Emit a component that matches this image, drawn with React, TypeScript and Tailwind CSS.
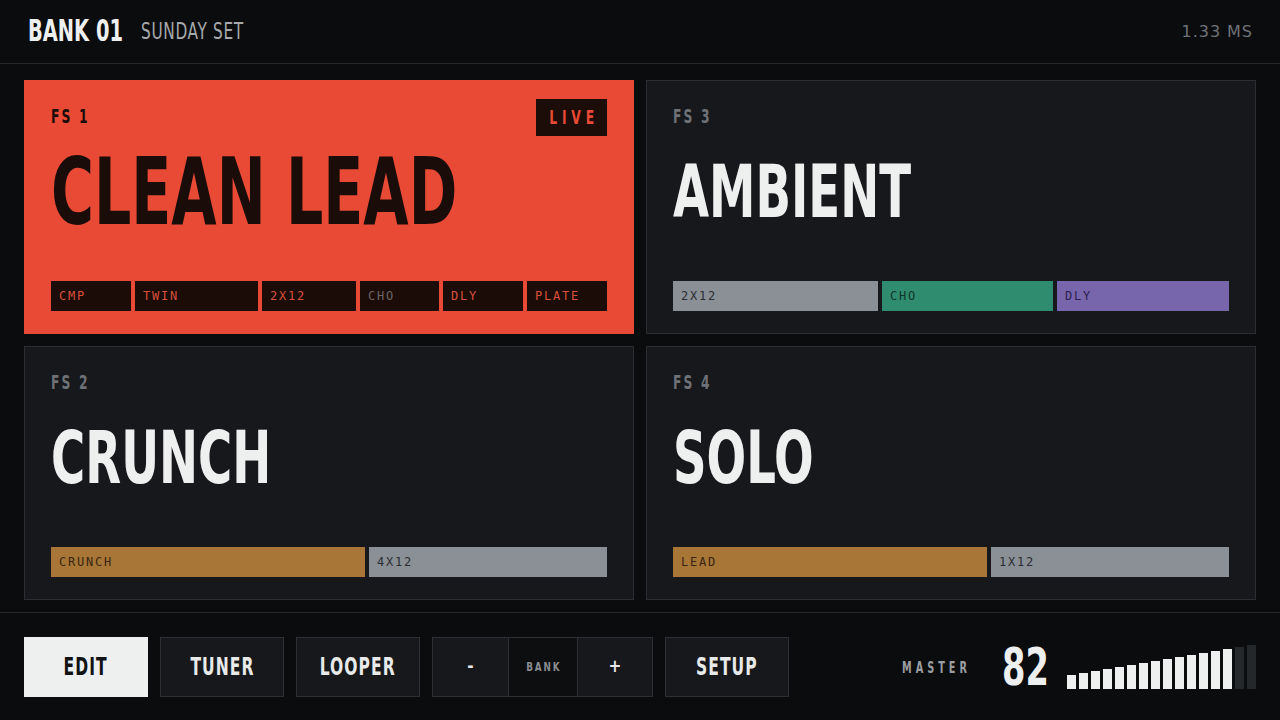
import React from 'react';

// Saira-like condensed look: DejaVu condensed squeezed horizontally
const COND = "font-['DejaVu_Sans_Condensed','DejaVu_Sans',sans-serif]";
const MONO = "font-['DejaVu_Sans_Mono','Liberation_Mono',monospace]";

type Chip = { label: string; cls: string };

type Preset = {
  fs: string;
  name: string;
  active?: boolean;
  chips: Chip[];
};

const presets: Preset[] = [
  {
    fs: 'FS 1',
    name: 'CLEAN LEAD',
    active: true,
    chips: [
      { label: 'CMP', cls: 'w-[80px] bg-[#1c0c07] text-[#d9503a]' },
      { label: 'TWIN', cls: 'w-[123px] bg-[#1c0c07] text-[#d9503a]' },
      { label: '2X12', cls: 'w-[94px] bg-[#1c0c07] text-[#d9503a]' },
      { label: 'CHO', cls: 'w-[79px] bg-[#1c0c07] text-[#6b6562]' },
      { label: 'DLY', cls: 'w-[80px] bg-[#1c0c07] text-[#d9503a]' },
      { label: 'PLATE', cls: 'w-[80px] bg-[#1c0c07] text-[#d9503a]' },
    ],
  },
  {
    fs: 'FS 3',
    name: 'AMBIENT',
    chips: [
      { label: '2X12', cls: 'w-[205px] bg-[#8b9096] text-[#2b2e31]' },
      { label: 'CHO', cls: 'w-[171px] bg-[#2f8c6e] text-[#10352a]' },
      { label: 'DLY', cls: 'w-[172px] bg-[#7866ad] text-[#2b2150]' },
    ],
  },
  {
    fs: 'FS 2',
    name: 'CRUNCH',
    chips: [
      { label: 'CRUNCH', cls: 'w-[314px] bg-[#a87637] text-[#3a2510]' },
      { label: '4X12', cls: 'w-[238px] bg-[#8b9096] text-[#2b2e31]' },
    ],
  },
  {
    fs: 'FS 4',
    name: 'SOLO',
    chips: [
      { label: 'LEAD', cls: 'w-[314px] bg-[#a87637] text-[#3a2510]' },
      { label: '1X12', cls: 'w-[238px] bg-[#8b9096] text-[#2b2e31]' },
    ],
  },
];

function PresetCard({ p }: { p: Preset }) {
  return (
    <div
      className={`flex flex-col px-[26px] pt-[18px] pb-[22px] border min-w-0 overflow-hidden ${
        p.active ? 'bg-[#e84a35] border-[#e84a35]' : 'bg-[#16181b] border-[#2a2d31]'
      }`}
    >
      <div className="h-[37px] flex items-center justify-between">
        <span
          className={`${COND} inline-block origin-left scale-x-[0.72] -mt-[3px] text-[19px] font-bold tracking-[0.16em] leading-none whitespace-nowrap ${
            p.active ? 'text-[#1a0c08]' : 'text-[#6e7175]'
          }`}
        >
          {p.fs}
        </span>
        {p.active && (
          <div className="w-[71px] h-[37px] bg-[#1c0d08] flex items-center justify-center">
            <span
              className={`${COND} inline-block scale-x-[0.72] text-[19px] font-bold tracking-[0.35em] pl-[0.35em] leading-none text-[#e84a35]`}
            >
              LIVE
            </span>
          </div>
        )}
      </div>

      <div
        className={`${COND} font-bold leading-none whitespace-nowrap origin-left ${
          p.active
            ? 'mt-[10px] text-[93px] scale-x-[0.7] text-[#1a0c08]'
            : 'mt-[19px] text-[73px] scale-x-[0.71] text-[#eef0f0]'
        }`}
      >
        {p.name}
      </div>

      <div className="mt-auto flex gap-1 h-[30px]">
        {p.chips.map((c) => (
          <div
            key={c.label}
            className={`${c.cls} shrink-0 ${MONO} flex items-center pl-2 text-[12px] tracking-[0.15em] whitespace-nowrap`}
          >
            {c.label}
          </div>
        ))}
      </div>
    </div>
  );
}

function FootButton({ label, active }: { label: string; active?: boolean }) {
  return (
    <button
      className={`w-[124px] h-[60px] flex items-center justify-center border ${
        active ? 'bg-[#eef0f0] border-[#eef0f0] text-[#111214]' : 'bg-[#16181b] border-[#2c2f33] text-[#e8eaea]'
      }`}
    >
      <span className={`${COND} inline-block scale-x-[0.72] text-[24px] font-bold tracking-[0.06em] leading-none`}>
        {label}
      </span>
    </button>
  );
}

const meter = Array.from({ length: 16 }, (_, i) => ({ h: 14 + i * 2, lit: i < 14 }));

export default function App() {
  return (
    <div className="w-[1280px] h-[720px] bg-[#0b0c0e] flex flex-col overflow-hidden">
      {/* Header */}
      <header className="h-16 shrink-0 border-b border-[#26282b] flex items-center justify-between pl-[28px] pr-[27px]">
        <div className="flex items-center">
          <span className="w-[113px] inline-block">
            <span
              className={`${COND} inline-block origin-left scale-x-[0.72] text-[30px] font-bold leading-none whitespace-nowrap text-[#eef0f0]`}
            >
              BANK 01
            </span>
          </span>
          <span
            className={`${COND} inline-block origin-left scale-x-[0.74] text-[23px] tracking-[0.04em] leading-none whitespace-nowrap text-[#a6a8ab]`}
          >
            SUNDAY SET
          </span>
        </div>
        <span className="font-['DejaVu_Sans',sans-serif] text-[16px] tracking-[0.06em] text-[#6f7276]">1.33 MS</span>
      </header>

      {/* Preset grid */}
      <main className="h-[548px] shrink-0 grid grid-cols-2 grid-rows-2 gap-3 px-6 pt-4 pb-3">
        {presets.map((p) => (
          <PresetCard key={p.fs} p={p} />
        ))}
      </main>

      {/* Footer */}
      <footer className="flex-1 border-t border-[#26282b] flex items-center justify-between pl-6 pr-6">
        <div className="flex items-center gap-3">
          <FootButton label="EDIT" active />
          <FootButton label="TUNER" />
          <FootButton label="LOOPER" />
          <div className="flex h-[60px] border border-[#2c2f33] bg-[#16181b]">
            <button className="w-[75px] flex items-center justify-center text-[#e8eaea]">
              <span className={`${COND} text-[17px] font-bold leading-none`}>-</span>
            </button>
            <div className="w-[70px] flex items-center justify-center bg-[#0d0e10] border-x border-[#2c2f33]">
              <span className={`${COND} inline-block scale-x-[0.75] text-[13px] font-bold tracking-[0.2em] pl-[0.2em] text-[#8a8d91]`}>
                BANK
              </span>
            </div>
            <button className="w-[74px] flex items-center justify-center text-[#e8eaea]">
              <span className={`${COND} text-[17px] font-bold leading-none`}>+</span>
            </button>
          </div>
          <FootButton label="SETUP" />
        </div>

        <div className="flex items-center">
          <span className="w-[100px] inline-block">
            <span
              className={`${COND} inline-block origin-left scale-x-[0.72] text-[15px] font-bold tracking-[0.37em] leading-none whitespace-nowrap text-[#9a9da1]`}
            >
              MASTER
            </span>
          </span>
          <span className="w-[65px] inline-block">
            <span
              className={`${COND} inline-block origin-left scale-x-[0.72] text-[52px] font-bold leading-none text-[#eef0f0]`}
            >
              82
            </span>
          </span>
          <div className="flex items-end gap-[3px] h-[44px]">
            {meter.map((b, i) => (
              <div
                key={i}
                className={`w-[9px] ${b.lit ? 'bg-[#eef0f0]' : 'bg-[#25282b]'}`}
                style={{ height: b.h }}
              />
            ))}
          </div>
        </div>
      </footer>
    </div>
  );
}
